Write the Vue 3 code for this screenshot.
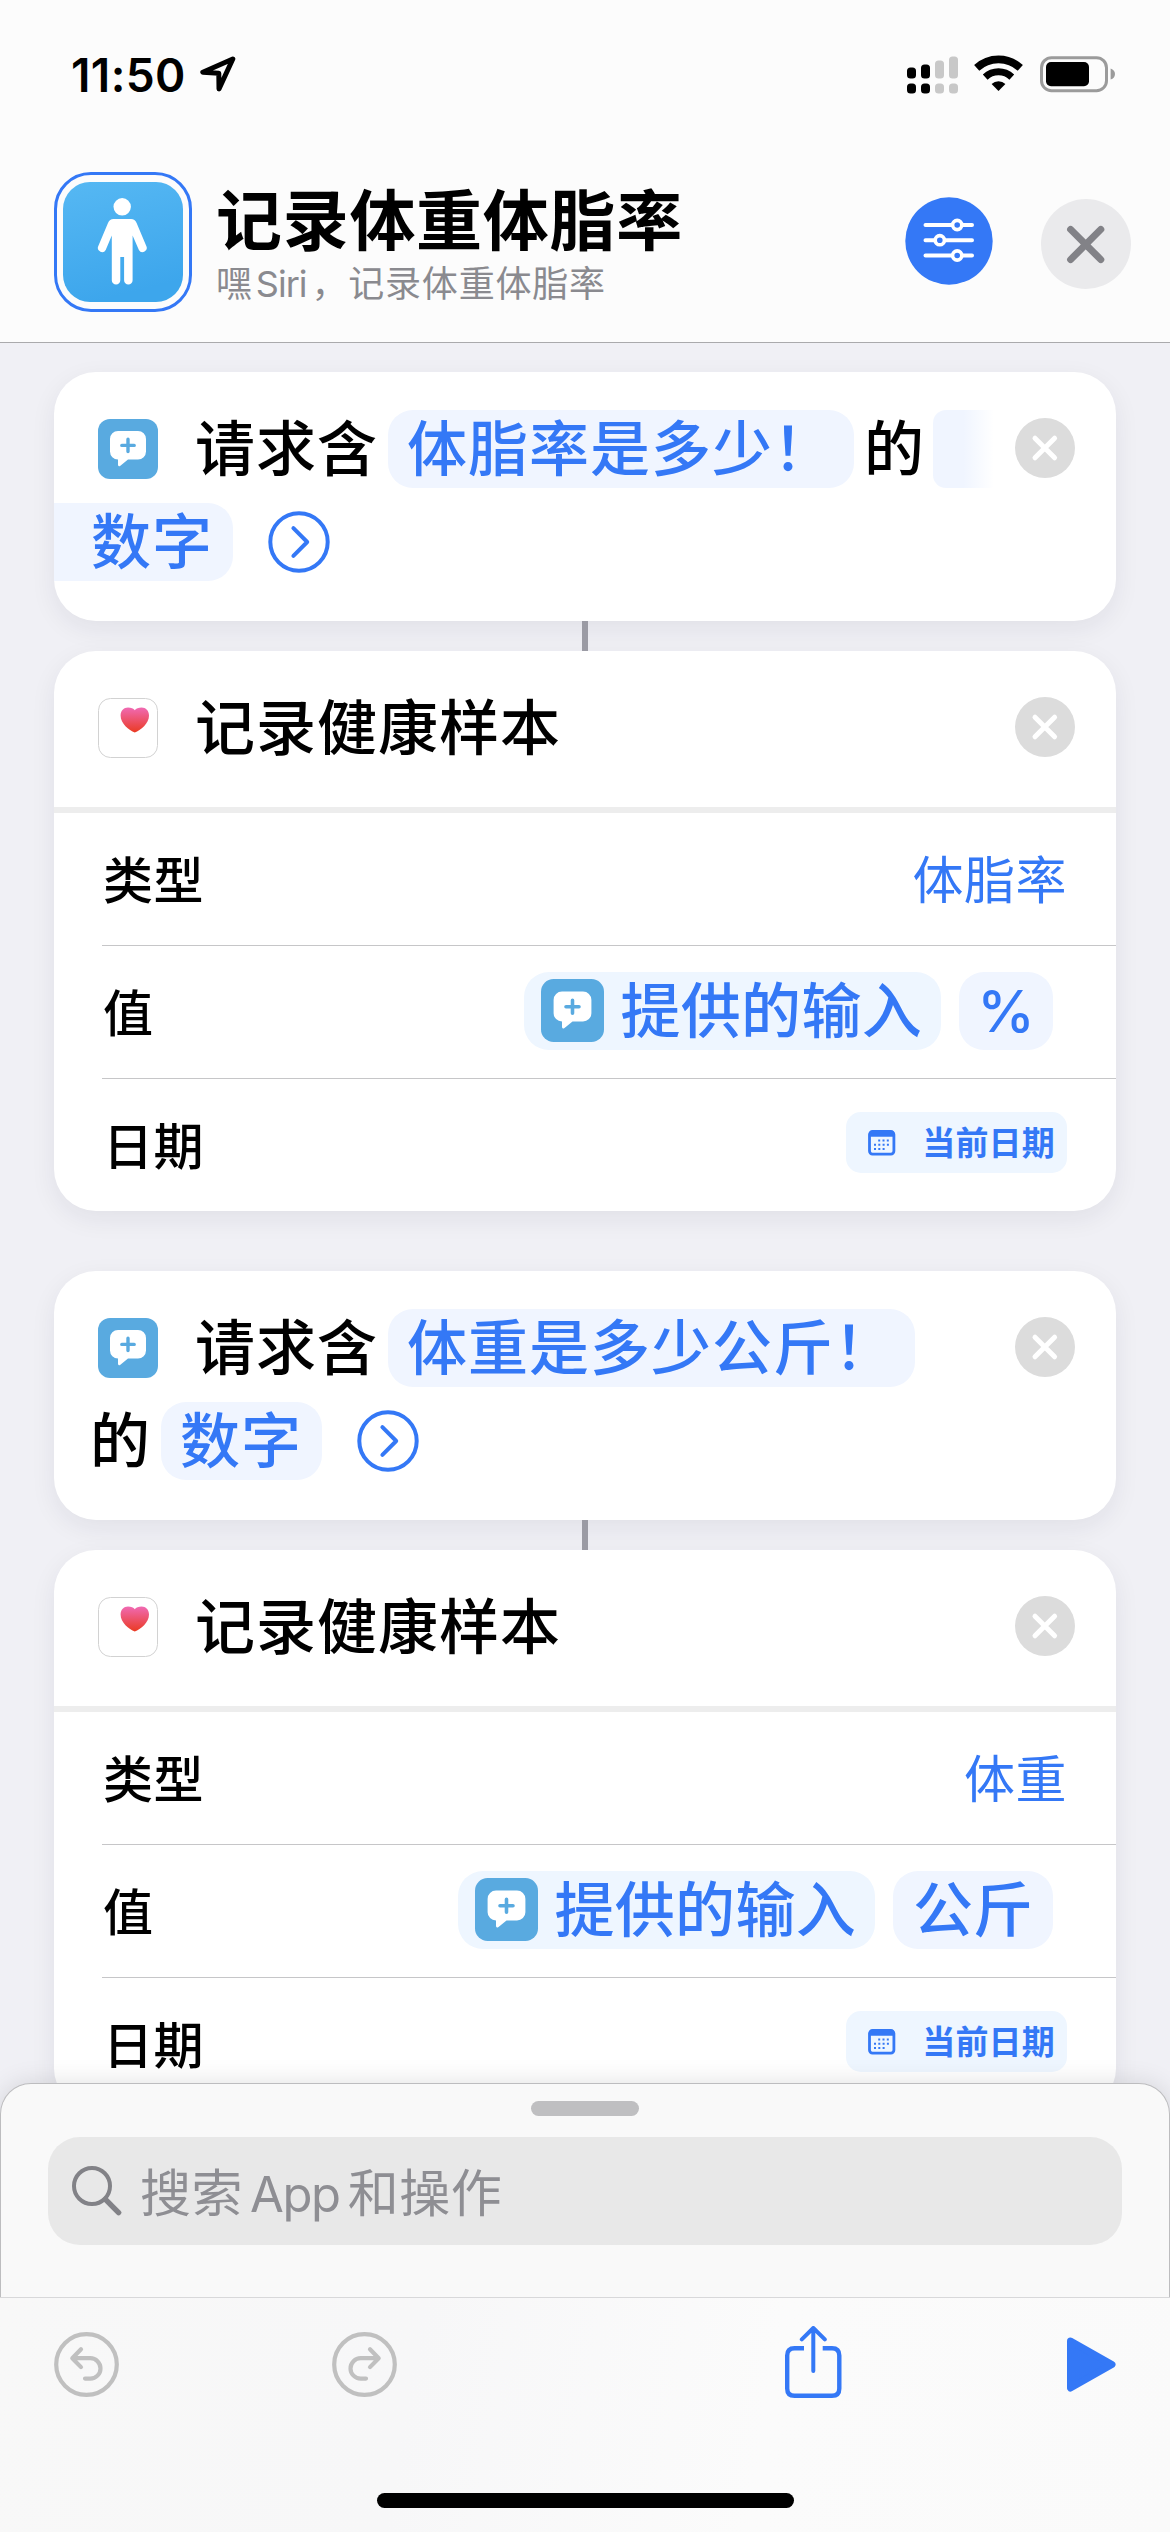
<script setup>
import { h } from 'vue'

const groups = [
  {
    prompt: '体脂率是多少！',
    wrapsToken: true,
    type: '体脂率',
    unit: '%',
  },
  {
    prompt: '体重是多少公斤！',
    wrapsToken: false,
    type: '体重',
    unit: '公斤',
  },
]

const AskIcon = () =>
  h('svg', { viewBox: '0 0 60 60', width: '100%', height: '100%', style: 'display:block' }, [
    h('rect', { width: 60, height: 60, rx: 12, fill: '#59aae0' }),
    h('path', {
      fill: '#fff',
      d: 'M20 12H40a8 8 0 0 1 8 8V32.5a8 8 0 0 1-8 8H30L22.4 46.7Q20 48.2 20 45.5V40.5a8 8 0 0 1-8-8V20a8 8 0 0 1 8-8Z',
    }),
    h('path', {
      stroke: '#59aae0',
      'stroke-width': 3.4,
      'stroke-linecap': 'round',
      d: 'M30 20.2V32.6M23.8 26.4H36.2',
    }),
  ])

const RemoveIcon = () =>
  h('svg', { viewBox: '0 0 60 60', width: 60, height: 60, style: 'display:block' }, [
    h('circle', { cx: 30, cy: 30, r: 30, fill: '#dcdcdc' }),
    h('path', {
      stroke: '#fff',
      'stroke-width': 5,
      'stroke-linecap': 'round',
      d: 'M20 20.2L39.6 39.8M39.6 20.2L20 39.8',
    }),
  ])
</script>

<template>
  <div class="screen">
    <header class="top">
      <div class="status">
        <span class="time">11:50</span>
        <svg class="loc" width="36" height="37" viewBox="0 0 36 37" fill="none">
          <path d="M32.8 3L2.8 16.3L18.8 17.2L19 33Z" stroke="#000" stroke-width="5" stroke-linejoin="round" />
        </svg>
        <svg class="signal" width="51" height="38" viewBox="0 0 51 38">
          <rect x="0" y="11.5" width="9" height="11" rx="3.5" />
          <rect x="14" y="8.5" width="9" height="14" rx="3.5" />
          <rect x="28" y="4.5" width="9" height="18" rx="3.5" fill="#c8c8c8" />
          <rect x="42" y="0.5" width="9" height="22" rx="3.5" fill="#c8c8c8" />
          <rect x="0" y="27.5" width="9" height="10" rx="3.5" />
          <rect x="14" y="27.5" width="9" height="10" rx="3.5" />
          <rect x="28" y="27.5" width="9" height="10" rx="3.5" fill="#c8c8c8" />
          <rect x="42" y="27.5" width="9" height="10" rx="3.5" fill="#c8c8c8" />
        </svg>
        <svg class="wifi" width="49" height="37" viewBox="0 0 49 37" fill="none">
          <path d="M2.7 12.9A32 32 0 0 1 46.3 12.9" stroke="#000" stroke-width="7.6" />
          <path d="M11.2 22.1A19.5 19.5 0 0 1 37.8 22.1" stroke="#000" stroke-width="7" />
          <path d="M24.5 36L17.6 29A10 10 0 0 1 31.4 29Z" fill="#000" />
        </svg>
        <svg class="battery" width="76" height="37" viewBox="0 0 76 37">
          <rect x="1.5" y="1.7" width="65" height="33" rx="10" fill="none" stroke="#9b9b9b" stroke-width="3" />
          <rect x="6" y="6" width="43" height="24.2" rx="5" />
          <path d="M70.6 12.4Q75 14 75 18T70.6 23.6Z" fill="#9b9b9b" />
        </svg>
      </div>

      <div class="title-bar">
        <div class="app-icon">
          <svg width="120" height="120" viewBox="0 0 120 120">
            <defs>
              <linearGradient id="sky" x1="0" y1="0" x2=".25" y2="1">
                <stop offset="0" stop-color="#56b8f3" />
                <stop offset="1" stop-color="#3da6ec" />
              </linearGradient>
            </defs>
            <rect width="120" height="120" rx="27" fill="url(#sky)" />
            <circle cx="59.2" cy="24.8" r="8.7" fill="#fff" />
            <path
              fill="#fff"
              d="M50.5 37H68Q72 37 73.6 41L83.6 64.8A4.2 4.2 0 0 1 75.9 68L69.6 53.5V98.2A4.2 4.2 0 0 1 61.1 98.2V75H57.3V98.2A4.2 4.2 0 0 1 48.8 98.2V53.5L42.7 68A4.2 4.2 0 0 1 35 64.8L45 41Q46.6 37 50.5 37Z"
            />
          </svg>
        </div>
        <div class="titles">
          <h1>记录体重体脂率</h1>
          <p>嘿<span class="latin">Siri</span>，记录体重体脂率</p>
        </div>
        <svg class="settings" width="88" height="88" viewBox="0 0 88 88" fill="none" stroke="#fff" stroke-width="4" stroke-linecap="round">
          <circle cx="44" cy="44" r="43.7" fill="#3478f6" stroke="none" />
          <path d="M20.5 28H67M20.5 43.2H67M20.5 58.5H67" />
          <g fill="#3478f6" stroke-width="3.6">
            <circle cx="52.2" cy="28" r="4.6" />
            <circle cx="34.8" cy="43.2" r="4.6" />
            <circle cx="52.2" cy="58.5" r="4.6" />
          </g>
        </svg>
        <svg class="close" width="90" height="90" viewBox="0 0 90 90">
          <circle cx="45" cy="45" r="45" fill="#eaeaec" />
          <path d="M29.6 30.4L59.8 60.6M59.8 30.4L29.6 60.6" stroke="#828287" stroke-width="7" stroke-linecap="round" />
        </svg>
      </div>
    </header>

    <main class="flow">
      <section v-for="g in groups" :key="g.type" class="group">
        <article class="card ask">
          <div class="line first">
            <div class="icon"><AskIcon /></div>
            <span class="phrase">请求含</span>
            <span class="token">{{ g.prompt }}</span>
            <template v-if="g.wrapsToken">
              <span class="phrase">的</span>
              <span class="token-fade"></span>
            </template>
            <div class="remove"><RemoveIcon /></div>
          </div>
          <div class="line second" :class="{ flush: g.wrapsToken }">
            <span v-if="!g.wrapsToken" class="phrase">的</span>
            <span class="token">数字</span>
            <svg class="more" width="62" height="62" viewBox="0 0 62 62" fill="none" stroke="#3478f6" stroke-width="4" stroke-linecap="round" stroke-linejoin="round">
              <circle cx="31" cy="31" r="28.7" />
              <path d="M25.4 17.2L39.2 31L25.4 44.8" />
            </svg>
          </div>
        </article>

        <div class="connector"></div>

        <article class="card sample">
          <div class="card-head">
            <svg class="icon" width="60" height="60" viewBox="0 0 60 60">
              <defs>
                <linearGradient id="heart" x1="0" y1="0" x2="0" y2="1">
                  <stop offset="0" stop-color="#f06ab4" />
                  <stop offset="1" stop-color="#ea3a22" />
                </linearGradient>
              </defs>
              <rect x=".5" y=".5" width="59" height="59" rx="12" fill="#fff" stroke="#d2d2d2" />
              <path fill="url(#heart)" d="M36.8 34.6C31 32 22.6 25.4 22.6 17.4C22.6 12.6 25.8 9.4 30 9.4C33 9.4 35.6 10.4 36.8 12.2C38 10.4 40.6 9.4 43.6 9.4C47.8 9.4 51 12.6 51 17.4C51 25.4 42.6 32 36.8 34.6Z" />
            </svg>
            <span class="phrase">记录健康样本</span>
            <div class="remove"><RemoveIcon /></div>
          </div>
          <div class="row">
            <span class="label">类型</span>
            <span class="value">{{ g.type }}</span>
          </div>
          <div class="row">
            <span class="label">值</span>
            <div class="tokens">
              <span class="token input">
                <span class="input-icon"><AskIcon /></span>提供的输入
              </span>
              <span class="token unit" :class="{ symbol: g.unit === '%' }">{{ g.unit }}</span>
            </div>
          </div>
          <div class="row">
            <span class="label">日期</span>
            <span class="date">
              <svg width="28" height="26" viewBox="0 0 28 26">
                <rect x="1.5" y="1.5" width="24.4" height="22.6" rx="3" fill="none" stroke="#3478f6" stroke-width="2.8" />
                <path d="M1 6.8V3.5Q1 1 4 1H23.5Q26.5 1 26.5 3.5V6.8Z" fill="#3478f6" />
                <path d="M10.2 10.6H22M6 14.8H22M6 19H18" stroke="#3478f6" stroke-width="2" stroke-dasharray="2 2.3" />
              </svg>
              <span>当前日期</span>
            </span>
          </div>
        </article>
      </section>
    </main>

    <section class="sheet">
      <div class="grabber"></div>
      <div class="search">
        <svg width="50" height="50" viewBox="0 0 50 50" fill="none" stroke="#828287">
          <circle cx="20" cy="20" r="18" stroke-width="4" />
          <path d="M33.4 33.4L46.6 46.6" stroke-width="5.4" stroke-linecap="round" />
        </svg>
        <span>搜索<span class="latin">App</span>和操作</span>
      </div>
    </section>

    <footer class="toolbar">
      <div class="actions">
        <svg class="undo" width="65" height="65" viewBox="0 0 65 65" fill="none" stroke="#c0c0c0" stroke-width="4.2" stroke-linecap="round" stroke-linejoin="round">
          <circle cx="32.5" cy="32.5" r="30.3" />
          <path d="M27 17.3L18.3 26.2L27 35.1M18.5 26.2H36.3A10.2 10.2 0 0 1 36.3 46.6H31" />
        </svg>
        <svg class="redo" width="65" height="65" viewBox="0 0 65 65" fill="none" stroke="#c0c0c0" stroke-width="4.2" stroke-linecap="round" stroke-linejoin="round">
          <circle cx="32.5" cy="32.5" r="30.3" />
          <path d="M38 17.3L46.7 26.2L38 35.1M46.5 26.2H28.7A10.2 10.2 0 0 0 28.7 46.6H34" />
        </svg>
        <svg class="share" width="57" height="73" viewBox="0 0 57 73" fill="none" stroke="#3478f6" stroke-width="4.4">
          <path d="M19 22.2H9.5Q2.2 22.2 2.2 29.5V62.5Q2.2 69.8 9.5 69.8H47Q54.3 69.8 54.3 62.5V29.5Q54.3 22.2 47 22.2H37.7" />
          <path d="M28.3 3V45M16.8 13.4L28.3 2L39.8 13.4" stroke-linecap="round" stroke-linejoin="round" stroke-width="4" />
        </svg>
        <svg class="play" width="49" height="55" viewBox="0 0 49 55">
          <path d="M3.5 4L45 27.5L3.5 51Z" fill="#3478f6" stroke="#3478f6" stroke-width="7" stroke-linejoin="round" />
        </svg>
      </div>
      <div class="home"></div>
    </footer>
  </div>
</template>

<style>
html,
body {
  margin: 0;
  background: #f0f0f5;
}
</style>

<style scoped>
.screen {
  width: 1170px;
  height: 2532px;
  display: flex;
  flex-direction: column;
  overflow: hidden;
  background: #f0f0f5;
  color: #000;
  font-family: Inter, 'Noto Sans CJK SC', sans-serif;
  white-space: nowrap;
}
svg {
  display: block;
  flex: none;
}

/* header */
.top {
  height: 342px;
  flex: none;
  background: #fcfcfc;
  border-bottom: 1px solid #aaaaac;
}
.status {
  height: 149px;
  display: flex;
  align-items: center;
  padding: 0 54px 0 71px;
}
.time {
  width: 129px;
  font-size: 46px;
  font-weight: 600;
  letter-spacing: 0.4px;
}
.signal {
  margin-left: auto;
}
.wifi {
  margin: -3px 17px 0 16px;
}
.title-bar {
  display: flex;
  align-items: flex-start;
  padding: 23px 39px 0 54px;
}
.app-icon {
  flex: none;
  padding: 7px 6px;
  border: 3px solid #3478f6;
  border-radius: 37px;
}
.titles {
  margin-left: 24px;
}
.titles h1 {
  margin: 12px 0 0;
  font-size: 66px;
  line-height: 74px;
  font-weight: 600;
  letter-spacing: 0.7px;
}
.titles p {
  margin: 4px 0 0;
  font-size: 36px;
  line-height: 44px;
  letter-spacing: 0.8px;
  color: #8a8a8f;
}
.titles .latin {
  margin: 0 5px 0 3px;
  letter-spacing: -1px;
}
.settings {
  margin: 25px 48px 0 auto;
}
.close {
  margin-top: 27px;
}

/* actions list */
.flow {
  flex: 1;
  min-height: 0;
  overflow: hidden;
  padding: 29px 54px 0;
}
.group {
  margin-bottom: 60px;
}
.card {
  background: #fff;
  border-radius: 42px;
  box-shadow: 0 8px 26px rgba(30, 30, 60, 0.07);
}
.ask {
  box-sizing: border-box;
  height: 249px;
  padding: 38px 0 0;
}
.line {
  display: flex;
  align-items: center;
  gap: 10px;
  height: 78px;
}
.first {
  padding: 0 41px 0 44px;
}
.second {
  margin-top: 15px;
  padding-left: 36px;
}
.flush {
  padding-left: 0;
}
.icon {
  width: 60px;
  height: 60px;
  margin-right: 27px;
  flex: none;
}
.phrase,
.token {
  font-size: 60px;
  line-height: 78px;
  letter-spacing: 1px;
  font-weight: 500;
}
.token {
  display: flex;
  height: 78px;
  padding: 0 20px 0 19px;
  border-radius: 25px;
  background: #f0f5ff;
  color: #3478f6;
}
.flush .token {
  padding-left: 37px;
  border-radius: 0 25px 25px 0;
}
.token-fade {
  width: 61px;
  height: 78px;
  margin-left: -2px;
  border-radius: 13px 0 0 13px;
  background: linear-gradient(90deg, #f0f5ff 50%, #fff);
}
.more {
  margin-left: 25px;
}
.remove {
  width: 60px;
  height: 60px;
  margin: 0 0 2px auto;
}
.connector {
  position: relative;
  width: 6px;
  height: 30px;
  margin: 0 auto;
  background: #9b9ba4;
}
.card-head {
  display: flex;
  align-items: center;
  height: 154px;
  padding: 0 41px 2px 44px;
  border-bottom: 6px solid #ededed;
}
.card-head .icon {
  margin-right: 37px;
}
.row {
  box-sizing: border-box;
  display: flex;
  align-items: center;
  justify-content: space-between;
  height: 133px;
  margin-left: 48px;
  padding-right: 49px;
  border-bottom: 1px solid #c6c6c8;
}
.row:last-child {
  height: 132px;
  border-bottom: 0;
}
.label,
.value {
  padding-top: 3px;
  font-size: 51px;
  line-height: 60px;
  letter-spacing: 0.5px;
}
.label {
  padding-left: 1px;
  font-size: 50px;
  font-weight: 500;
}
.value {
  color: #3478f6;
}
.tokens {
  display: flex;
  gap: 18px;
  margin: 0 14px 3px 0;
}
.input {
  align-items: center;
  padding: 0 19px 0 17px;
  background: #eef6ff;
  letter-spacing: 0.3px;
}
.input-icon {
  width: 63px;
  height: 63px;
  margin-right: 17px;
}
.unit {
  padding: 0 20px;
  letter-spacing: 0;
}
.symbol {
  justify-content: center;
  box-sizing: border-box;
  width: 94px;
  font-size: 58px;
}
.date {
  display: flex;
  align-items: center;
  gap: 26px;
  height: 61px;
  margin-bottom: 5px;
  padding: 0 12px 0 22px;
  border-radius: 15px;
  background: #eef6ff;
  color: #3478f6;
  font-size: 33px;
  font-weight: 600;
  letter-spacing: 0.2px;
}
.date > span {
  padding-bottom: 4px;
}

/* search sheet */
.sheet {
  position: relative;
  box-sizing: border-box;
  height: 214px;
  flex: none;
  padding: 17px 47px 0;
  border: 1px solid #bdbdbf;
  border-bottom: 0;
  border-radius: 31px 31px 0 0;
  background: #f9f9f9;
  box-shadow: 0 0 26px rgba(0, 0, 0, 0.12);
}
.grabber {
  width: 108px;
  height: 15px;
  margin: 0 auto 21px;
  border-radius: 8px;
  background: #bfbfc1;
}
.search {
  display: flex;
  align-items: center;
  height: 108px;
  padding-left: 24px;
  border-radius: 32px;
  background: #e8e8e8;
  color: #8e8e93;
  font-size: 51px;
  letter-spacing: 0.5px;
}
.search > span {
  margin-left: 18px;
  padding-bottom: 3px;
}
.search .latin {
  margin: 0 8px 0 7px;
  font-size: 49px;
  letter-spacing: -1.4px;
}

/* bottom toolbar */
.toolbar {
  position: relative;
  box-sizing: border-box;
  height: 235px;
  flex: none;
  border-top: 1px solid #d8d8da;
  background: linear-gradient(100deg, #f8f8f8, #f7f7f8 35%, #fbfbfb 65%, #fafafa);
}
.actions {
  display: flex;
  align-items: center;
  height: 133px;
  padding: 0 54px;
}
.redo {
  margin-left: 213px;
}
.share {
  margin: -4px 0 0 auto;
}
.play {
  margin-left: 225px;
}
.home {
  width: 417px;
  height: 15px;
  margin: 62px auto 0;
  border-radius: 8px;
  background: #000;
}
</style>
